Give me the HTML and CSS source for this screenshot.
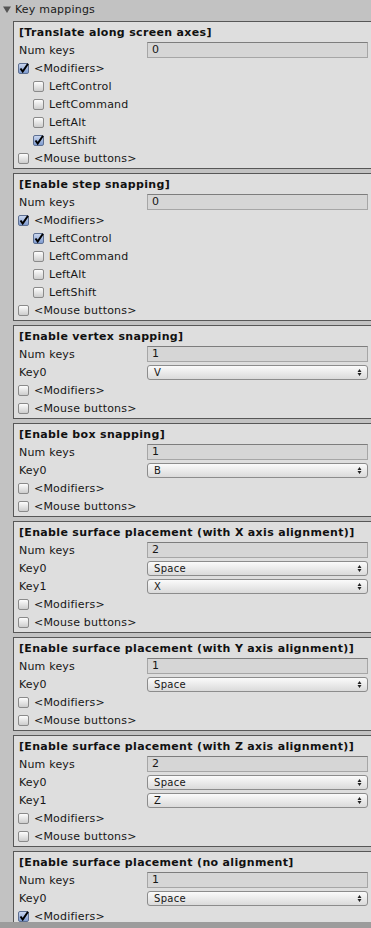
FILE: index.html
```html
<!DOCTYPE html>
<html lang="en">
<head>
  <meta charset="UTF-8">
  <meta name="viewport" content="width=device-width, initial-scale=1.0">
  <title>Key mappings</title>
  <link rel="stylesheet" href="styles.css">
</head>
<body>
  <div class="viewport">
    <div class="foldout">
      <svg class="fold-arrow" width="8" height="7" viewBox="0 0 8 7"><path d="M0 0.5 L8 0.5 L4 7 Z"/></svg>
      Key mappings
    </div>
    <div class="groups">
      <section class="group">
        <div class="row title">[Translate along screen axes]</div>
        <div class="row"><span class="label">Num keys</span><span class="field">0</span></div>
        <div class="row"><span class="check on"><svg viewBox="0 0 11 11"><path d="M2.5 5.5 L4.7 8.6 L10 0.8"/></svg></span>&lt;Modifiers&gt;</div>
        <div class="row sub"><span class="check"></span>LeftControl</div>
        <div class="row sub"><span class="check"></span>LeftCommand</div>
        <div class="row sub"><span class="check"></span>LeftAlt</div>
        <div class="row sub"><span class="check on"><svg viewBox="0 0 11 11"><path d="M2.5 5.5 L4.7 8.6 L10 0.8"/></svg></span>LeftShift</div>
        <div class="row"><span class="check"></span>&lt;Mouse buttons&gt;</div>
      </section>

      <section class="group">
        <div class="row title">[Enable step snapping]</div>
        <div class="row"><span class="label">Num keys</span><span class="field">0</span></div>
        <div class="row"><span class="check on"><svg viewBox="0 0 11 11"><path d="M2.5 5.5 L4.7 8.6 L10 0.8"/></svg></span>&lt;Modifiers&gt;</div>
        <div class="row sub"><span class="check on"><svg viewBox="0 0 11 11"><path d="M2.5 5.5 L4.7 8.6 L10 0.8"/></svg></span>LeftControl</div>
        <div class="row sub"><span class="check"></span>LeftCommand</div>
        <div class="row sub"><span class="check"></span>LeftAlt</div>
        <div class="row sub"><span class="check"></span>LeftShift</div>
        <div class="row"><span class="check"></span>&lt;Mouse buttons&gt;</div>
      </section>

      <section class="group">
        <div class="row title">[Enable vertex snapping]</div>
        <div class="row"><span class="label">Num keys</span><span class="field">1</span></div>
        <div class="row"><span class="label">Key0</span><span class="popup">V<svg class="updown" width="5" height="7" viewBox="0 0 5 7"><path d="M0.5 3 L2.5 0 L4.5 3 Z M0.5 4 L2.5 7 L4.5 4 Z"/></svg></span></div>
        <div class="row"><span class="check"></span>&lt;Modifiers&gt;</div>
        <div class="row"><span class="check"></span>&lt;Mouse buttons&gt;</div>
      </section>

      <section class="group">
        <div class="row title">[Enable box snapping]</div>
        <div class="row"><span class="label">Num keys</span><span class="field">1</span></div>
        <div class="row"><span class="label">Key0</span><span class="popup">B<svg class="updown" width="5" height="7" viewBox="0 0 5 7"><path d="M0.5 3 L2.5 0 L4.5 3 Z M0.5 4 L2.5 7 L4.5 4 Z"/></svg></span></div>
        <div class="row"><span class="check"></span>&lt;Modifiers&gt;</div>
        <div class="row"><span class="check"></span>&lt;Mouse buttons&gt;</div>
      </section>

      <section class="group">
        <div class="row title">[Enable surface placement (with X axis alignment)]</div>
        <div class="row"><span class="label">Num keys</span><span class="field">2</span></div>
        <div class="row"><span class="label">Key0</span><span class="popup">Space<svg class="updown" width="5" height="7" viewBox="0 0 5 7"><path d="M0.5 3 L2.5 0 L4.5 3 Z M0.5 4 L2.5 7 L4.5 4 Z"/></svg></span></div>
        <div class="row"><span class="label">Key1</span><span class="popup">X<svg class="updown" width="5" height="7" viewBox="0 0 5 7"><path d="M0.5 3 L2.5 0 L4.5 3 Z M0.5 4 L2.5 7 L4.5 4 Z"/></svg></span></div>
        <div class="row"><span class="check"></span>&lt;Modifiers&gt;</div>
        <div class="row"><span class="check"></span>&lt;Mouse buttons&gt;</div>
      </section>

      <section class="group">
        <div class="row title">[Enable surface placement (with Y axis alignment)]</div>
        <div class="row"><span class="label">Num keys</span><span class="field">1</span></div>
        <div class="row"><span class="label">Key0</span><span class="popup">Space<svg class="updown" width="5" height="7" viewBox="0 0 5 7"><path d="M0.5 3 L2.5 0 L4.5 3 Z M0.5 4 L2.5 7 L4.5 4 Z"/></svg></span></div>
        <div class="row"><span class="check"></span>&lt;Modifiers&gt;</div>
        <div class="row"><span class="check"></span>&lt;Mouse buttons&gt;</div>
      </section>

      <section class="group">
        <div class="row title">[Enable surface placement (with Z axis alignment)]</div>
        <div class="row"><span class="label">Num keys</span><span class="field">2</span></div>
        <div class="row"><span class="label">Key0</span><span class="popup">Space<svg class="updown" width="5" height="7" viewBox="0 0 5 7"><path d="M0.5 3 L2.5 0 L4.5 3 Z M0.5 4 L2.5 7 L4.5 4 Z"/></svg></span></div>
        <div class="row"><span class="label">Key1</span><span class="popup">Z<svg class="updown" width="5" height="7" viewBox="0 0 5 7"><path d="M0.5 3 L2.5 0 L4.5 3 Z M0.5 4 L2.5 7 L4.5 4 Z"/></svg></span></div>
        <div class="row"><span class="check"></span>&lt;Modifiers&gt;</div>
        <div class="row"><span class="check"></span>&lt;Mouse buttons&gt;</div>
      </section>

      <section class="group">
        <div class="row title">[Enable surface placement (no alignment]</div>
        <div class="row"><span class="label">Num keys</span><span class="field">1</span></div>
        <div class="row"><span class="label">Key0</span><span class="popup">Space<svg class="updown" width="5" height="7" viewBox="0 0 5 7"><path d="M0.5 3 L2.5 0 L4.5 3 Z M0.5 4 L2.5 7 L4.5 4 Z"/></svg></span></div>
        <div class="row"><span class="check on"><svg viewBox="0 0 11 11"><path d="M2.5 5.5 L4.7 8.6 L10 0.8"/></svg></span>&lt;Modifiers&gt;</div>
        <div class="row"><span class="check"></span>&lt;Mouse buttons&gt;</div>
      </section>
    </div>
  </div>
  <div class="statusbar"></div>
</body>
</html>
```

FILE: styles.css
```css
body {
  margin: 0;
  background-color: #c2c2c2;
  font-family: "DejaVu Sans", Verdana, sans-serif;
  font-size: 11px;
  letter-spacing: 0.2px;
  color: #161616;
  overflow: hidden;
}
.viewport {
  height: 922px;
  overflow: hidden;
}
.foldout {
  height: 18px;
  display: flex;
  align-items: center;
  padding-left: 3px;
  color: #1a1a1a;
}
.fold-arrow {
  fill: #555;
  margin-right: 4px;
}
.groups {
  display: flex;
  flex-direction: column;
  gap: 4px;
  padding: 3px 0 0 13px;
}
.group {
  background-color: #dedede;
  border: 1px solid #575757;
  border-right: none;
  padding: 1px 3px 1px 5px;
}
.row {
  height: 18px;
  display: flex;
  align-items: center;
  white-space: nowrap;
}
.title {
  font-weight: bold;
  letter-spacing: 0.33px;
  color: #111;
}
.sub {
  padding-left: 15px;
}
.label {
  width: 128px;
  flex: none;
}
.field {
  flex: 1;
  box-sizing: border-box;
  height: 16px;
  line-height: 14px;
  padding-left: 4px;
  background-color: #d6d6d6;
  border: 1px solid #a6a6a6;
  border-top-color: #7d7d7d;
}
.popup {
  flex: 1;
  box-sizing: border-box;
  height: 15px;
  display: flex;
  align-items: center;
  justify-content: space-between;
  padding: 0 5px 0 6px;
  font-size: 10px;
  letter-spacing: 0.3px;
  background: linear-gradient(#fbfbfb, #dadada);
  border: 1px solid #8c8c8c;
  border-radius: 3px;
}
.updown {
  fill: #222;
}
.check {
  position: relative;
  flex: none;
  box-sizing: border-box;
  width: 11px;
  height: 11px;
  margin: 0 5px 0 -1px;
  border: 1px solid #8a8a8a;
  border-radius: 2px;
  background: linear-gradient(#fdfdfd, #cdcdcd);
}
.check.on {
  border-color: #5d6f92;
  background: linear-gradient(#c9d6ee, #7f9bd0);
}
.check svg {
  position: absolute;
  left: -1px;
  top: -1px;
  width: 11px;
  height: 11px;
  overflow: visible;
  fill: none;
  stroke: #000;
  stroke-width: 2;
}
.statusbar {
  height: 6px;
  background-color: #9c9c9c;
}
```
